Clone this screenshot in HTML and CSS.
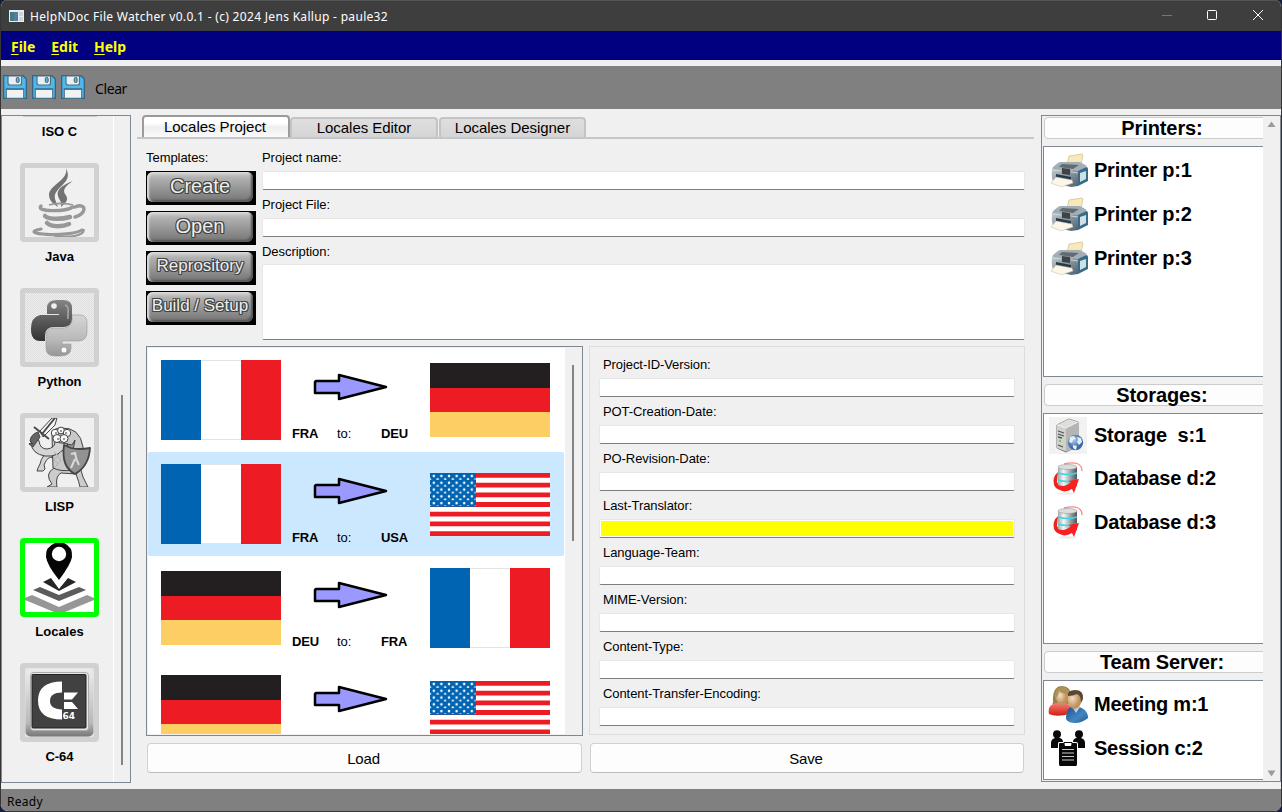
FILE: index.html
```html
<!DOCTYPE html>
<html lang="en">
<head>
<meta charset="utf-8">
<title>HelpNDoc File Watcher</title>
<link rel="stylesheet" href="styles.css">
</head>
<body>
<svg class="defs" width="0" height="0" aria-hidden="true">
  <defs>
    <linearGradient id="metal" x1="0" y1="0" x2="1" y2="1"><stop offset="0" stop-color="#c2cad0"/><stop offset=".5" stop-color="#87939b"/><stop offset="1" stop-color="#4a6071"/></linearGradient>
    <linearGradient id="disk" x1="0" y1="0" x2="1" y2="0"><stop offset="0" stop-color="#a9a9a9"/><stop offset=".3" stop-color="#f6f6f6"/><stop offset=".65" stop-color="#a0a3a5"/><stop offset="1" stop-color="#4f5357"/></linearGradient>
    <radialGradient id="globe" cx=".4" cy=".35"><stop offset="0" stop-color="#a9c8ee"/><stop offset="1" stop-color="#3b69ab"/></radialGradient>
    <radialGradient id="skin" cx=".35" cy=".4"><stop offset="0" stop-color="#f5dfc0"/><stop offset="1" stop-color="#c0925f"/></radialGradient>
    <linearGradient id="red" x1="0" y1="0" x2="0" y2="1"><stop offset="0" stop-color="#f58072"/><stop offset="1" stop-color="#d31a12"/></linearGradient>
    <linearGradient id="blue" x1="0" y1="0" x2="1" y2="1"><stop offset="0" stop-color="#1a4f8f"/><stop offset=".6" stop-color="#4487c0"/><stop offset="1" stop-color="#1d5495"/></linearGradient>
    <linearGradient id="snakeDark" x1="0" y1="0" x2="0" y2="1"><stop offset="0" stop-color="#858585"/><stop offset=".4" stop-color="#626262"/><stop offset="1" stop-color="#333"/></linearGradient>
    <linearGradient id="snakeLight" x1="0" y1="0" x2="0" y2="1"><stop offset="0" stop-color="#d6d6d6"/><stop offset=".6" stop-color="#b9b9b9"/><stop offset="1" stop-color="#969696"/></linearGradient>
    <linearGradient id="frame" x1="0" y1="0" x2="0" y2="1"><stop offset="0" stop-color="#ececec"/><stop offset=".8" stop-color="#b9b9b9"/><stop offset="1" stop-color="#777"/></linearGradient>
    <pattern id="checker" width="2" height="2" patternUnits="userSpaceOnUse"><rect width="2" height="2" fill="#efefef"/><path d="M0 0h1v1H0zM1 1h1v1H1z" fill="#dcdcdc"/></pattern>
    <pattern id="stars" width="7.6" height="6.8" patternUnits="userSpaceOnUse"><circle cx="3.8" cy="3" r="1.25" fill="#fff"/><circle cx="7.6" cy="6.3" r="1.25" fill="#fff"/><circle cx="0" cy="6.3" r="1.25" fill="#fff"/></pattern>

    <symbol id="floppy" viewBox="0 0 24 24">
      <path d="M.7.7H20l3.3 3.3v19.3H.7z" fill="#4fb9ec" stroke="#34647f" stroke-width="1.3"/>
      <path d="M5 1h13.500v7q0 2-2 2H7q-2 0-2-2z" fill="#e9eff2" stroke="#4d7082" stroke-width="1.200"/>
      <rect x="13.300" y="2.500" width="2.800" height="5" rx="1.200" fill="#63b8dd" stroke="#3c5967"/>
      <path d="M3.300 13.600h17.400v9.800H3.300z" fill="#f2f2f2" stroke="#45748d" stroke-width="1.100"/>
      <path d="M3.300 13.300h17.400v1.800H3.300z" fill="#3a7fa6"/>
    </symbol>

    <symbol id="java" viewBox="0 0 69 69">
      <path d="M41 0C44 12 24 17 24 27c0 5 4 9 9 12-3-8-5-11-1-16 5-7 15-11 9-23z" fill="#737373"/>
      <path d="M48 13c-11 4-17 9-15 15 1 4 4 5 3 11 6-5 8-8 4-13-3-5 2-9 8-13z" fill="#737373"/>
      <g fill="none" stroke="#989898" stroke-linecap="round">
        <path d="M16 38c-6 6 24 6 32 1" stroke-width="3.400"/>
        <path d="M50 39c12-5 12 7 0 10" stroke-width="3.400"/>
        <path d="M20 48c4 4 18 3 25 1M22 55c4 4 15 4 22 1" stroke-width="4.500"/>
        <path d="M16 61c-26 5 28 9 41 1" stroke-width="3.200"/>
        <path d="M30 68c14 2 28 0 29-6" stroke-width="2"/>
      </g>
      <path d="M24 37c6-2 17-2 24 0" fill="none" stroke="#999" stroke-width="1.800"/>
    </symbol>

    <symbol id="python" viewBox="0 0 69 69">
      <rect width="69" height="69" fill="url(#checker)"/>
      <path d="M47 22h8q7 0 7 8v9q0 9-9 9H37v3h9v4q0 8-11 8h-5q-9 0-9-8V43q0-8 8-8h9q9 0 9-8z" fill="url(#snakeLight)" stroke="#999" stroke-width=".6"/>
      <path d="M22 21v-6q0-8 10-8h6q9 0 9 8v10q0 9-9 9h-9q-9 0-9 9v5h-5q-9 0-9-12t9-14h19v-1z" fill="url(#snakeDark)"/>
      <path d="M40 12q4 1 3 8v6" fill="none" stroke="#aaa" stroke-width="1.500"/>
      <circle cx="29" cy="13" r="2.800" fill="#eee"/><circle cx="39" cy="57" r="3" fill="#fafafa" stroke="#888" stroke-width=".6"/>
    </symbol>

    <symbol id="lisp" viewBox="0 0 69 69">
      <g stroke="#444" stroke-width="1" stroke-linejoin="round">
        <path d="M25 34Q17 36 15 46l-2 4-1 3 6 0 2-2-1-4q4-10 9-7z" fill="#d3d3d3"/>
        <path d="M29 50q-10 6-2 16l-5 3h10q-2-11 4-14l15 1q3 8 4 13h8q-6-10-8-20z" fill="#ccc"/>
        <path d="M27 17q0-7 9-7 19-1 22 19l1 10q-1 12-11 13-12 2-20-2z" fill="#c9c9c9"/>
        <path d="M43 26Q34 40 20 38 7 36 6 25l5-7 3 5q1 8 8 8 8-1 8-7z" fill="#d5d5d5"/>
        <path d="m15 13 12-13h5l-2 7-12 12z" fill="#f5f5f5"/><path d="m9 9 15 12M30 0 17 16" fill="none" stroke-width="1.800"/>
        <path d="M13 14q-7 2-8 9l3 3q-4-2-4 0l4 3 7-10z" fill="#666"/>
        <g fill="#f9f9f9"><circle cx="30" cy="15" r="3.700"/><circle cx="36" cy="12.500" r="3.400"/><circle cx="42" cy="15" r="3.700"/><circle cx="32" cy="20.500" r="4"/><circle cx="39" cy="20.500" r="4"/></g>
        <path d="m44 31-2-5 5 1 3-5-2 10z" fill="#999"/>
        <path d="m39 27 7 3q8 2 19 0-1 18-15 26-14-7-11-29z" fill="#929292" stroke-width="1.800"/>
      </g>
      <path d="m46 36 4-1q1 7 4 12M50 41l-4 9" fill="none" stroke="#d9d9d9" stroke-width="2"/>
      <path d="m29 34 4 4-4 4 4 4-4 4M36 34l-4 4 4 4-4 5" fill="none" stroke="#b2b2b2" stroke-width="1"/>
      <g fill="#222"><circle cx="31" cy="15" r=".8"/><circle cx="36" cy="13" r=".8"/><circle cx="41" cy="15" r=".8"/><circle cx="33" cy="21" r=".8"/><circle cx="39" cy="21" r=".8"/></g>
    </symbol>

    <symbol id="locales" viewBox="0 0 69 69">
      <rect width="69" height="69" fill="#fff"/>
      <path d="m0 55 7-3 27 12 28-12 7 3v2L40 69H29L0 57z" fill="#979797"/>
      <path d="m8 47 7-3 19 8 20-8 7 3-27 11z" fill="#5c5c5c"/>
      <path d="m18 39 8-4 8 11 9-11 8 4-17 9z" fill="#262626"/>
      <path d="M30 0h9q9 4 8 14-1 7-13 23Q22 22 21 14 20 4 30 0z" fill="#050505"/>
      <circle cx="34" cy="11" r="7.200" fill="#fff"/>
    </symbol>

    <symbol id="commodore" viewBox="0 0 69 69">
      <rect width="69" height="69" fill="#e2e2e2"/>
      <rect x=".5" y=".5" width="68" height="68" rx="5" fill="url(#frame)"/>
      <rect x="5.500" y="4.500" width="58" height="58" rx="3" fill="#e8e8e8" stroke="#aaa"/>
      <rect x="7" y="6.500" width="54" height="53.500" rx="1" fill="#414141" stroke="#222"/>
      <path d="M37 13.500v11q-12 0-12 8.500 0 8 12 8.500v10q-24 0-24-19t24-19z" fill="#fff"/>
      <path d="M39 24.500h14l-6 7h-8zM39 34h8l6 7H39z" fill="#fff"/>
      <text x="37.500" y="51" class="commodore-number">64</text>
    </symbol>

    <symbol id="printer" viewBox="0 0 38 34">
      <path d="m16 11 2-8 13-2 1 1-2 10z" fill="#f8e9bb" stroke="#c3b587" stroke-width=".6"/>
      <path d="m2 14 5-4q1-1 3-1h19l7 4-9 6-26-2z" fill="#a3aeb6"/>
      <path d="m11 11 17 1-6 4-14-2z" fill="#626b70"/>
      <path d="M1 16q14 2 26 2v15l-7 1-17-4Q0 26 1 16z" fill="url(#metal)"/>
      <path d="m27 18 8-4q2 0 2 2v12l-10 5z" fill="#386b88"/><path d="m29 20 6-2v8l-6 3z" fill="#d0e1e5"/>
      <path d="m11 15 8 1v6l-8-1z" fill="#3d4448"/><path d="m5 21 15 3v4L5 24z" fill="#253b49"/>
      <path d="m5 24 16 3 1 3-12 4-10-4z" fill="#fbf6e8" stroke="#bbb8a8" stroke-width=".5"/>
      <path d="m2 17 8 1m10 1 7 1" fill="none" stroke="#dbe3e7" stroke-width=".8"/>
    </symbol>

    <symbol id="server" viewBox="0 0 38 37">
      <rect width="38" height="37" fill="#f2f2f2"/>
      <path d="m8 8 12-6 9 3v24l-12 6-9-4z" fill="#bbb" stroke="#777"/>
      <path d="m8 8 9 3v23l-9-3z" fill="#d0d0cd"/><path d="m17 11 12-6v24l-12 6z" fill="#b5b6b3"/>
      <path d="m8 8 12-6 9 3-12 6z" fill="#dededb"/><path d="m8 8 9 3 12-6" fill="none" stroke="#fff" stroke-width=".7"/>
      <path d="m9 14 6 2M9 17l6 2M9 20l4 1M9 28l5 2" stroke="#555" stroke-width="1.300"/><circle cx="11" cy="24" r="1" fill="#51d51d"/>
      <circle cx="26.500" cy="25.500" r="7.700" fill="url(#globe)"/><path d="m21 20 4-1 2 3-3 1-1 3-3-1zM28 20l4 1 1 4-3 3-2-3 1-2zM24 28l4 1-1 4-3-2z" fill="#e3edf4"/>
    </symbol>

    <symbol id="database" viewBox="0 0 32 34">
      <ellipse cx="15" cy="31.500" rx="9" ry="1.500" fill="#eee"/>
      <path d="M12 2Q30-2 30 9" fill="none" stroke="#ff8585" stroke-width="1.300"/>
      <path d="M6 10Q0 15 2 23q2 5 8 5l-5-8z" fill="#ed2522"/>
      <path d="M6 5v19q9 4 19 0V5z" fill="url(#disk)"/><ellipse cx="15.500" cy="5" rx="9.500" ry="2.500" fill="#ddd" stroke="#999" stroke-width=".6"/>
      <path d="M6 11q9 3 19 0M6 18q9 3 19 0" fill="none" stroke="#3bd7e4" stroke-width="1.500"/>
      <path d="M4 22q8 5 15-2l-3-1 11-2-5 14-2-4Q10 33 4 24z" fill="#f9201f"/>
    </symbol>

    <symbol id="meeting" viewBox="0 0 40 38">
      <path d="M5 18Q4 1 14 1q9 0 9 11v7H4z" fill="#97804e"/>
      <path d="M1 29q-2-10 8-11h9q6 2 6 10l-7 2Q7 32 1 29z" fill="url(#red)"/>
      <ellipse cx="14" cy="12" rx="6" ry="8" fill="url(#skin)"/><path d="M7 14Q6 2 14 2q7 0 8 7-8 0-11-3-1 6-4 8z" fill="#ae9259"/>
      <path d="M18 34q0-13 9-13 13 2 13 12-6 5-13 5t-9-4z" fill="url(#blue)"/>
      <path d="m21 21 4 2 3 5 4-6z" fill="#bcd2e7"/><ellipse cx="26.500" cy="15" rx="7" ry="9" fill="url(#skin)"/>
      <path d="M20 11Q19 5 27 5q9 0 8 9l-2 4q0-8-4-9-4 2-9 2z" fill="#594633"/>
    </symbol>

    <symbol id="session" viewBox="0 0 36 36">
      <g fill="#080808"><circle cx="7" cy="4.300" r="4"/><circle cx="29" cy="4.300" r="4"/>
      <path d="M1 18v-5q0-4 4-5h5q3 1 3 4H9q-1 0-1 2v4zM28 18v-4q0-2-2-2h-3q0-3 3-4h5q4 1 4 5v5z"/>
      <path d="M10 13h4l1 3h6l1-3h4q1 0 1 1v20q0 2-1 2H10q-1 0-1-2V14q0-1 1-1z"/></g>
      <path d="M14 14.500v-2h8v2" fill="none" stroke="#080808"/><path d="M12 19.500h12M12 23h12M12 26.500h12M12 30h12" stroke="#c9c9c9" stroke-width="1.100"/>
    </symbol>

    <symbol id="flag-fra" viewBox="0 0 120 80"><rect width="120" height="80" fill="#e4e4e4"/><path d="M40 1h40v78H40z" fill="#fff"/><path d="M0 0h40v80H0z" fill="#0064b3"/><path d="M80 0h40v80H80z" fill="#ed1c24"/></symbol>
    <symbol id="flag-deu" viewBox="0 0 120 74"><path d="M0 0h120v25H0z" fill="#231f20"/><path d="M0 25h120v24H0z" fill="#ed1c24"/><path d="M0 49h120v25H0z" fill="#fdce63"/></symbol>
    <symbol id="flag-usa" viewBox="0 0 120 63">
      <rect width="120" height="63" fill="#fff"/>
      <path d="M0 2.400h120M0 12.100h120M0 21.800h120M0 31.500h120M0 41.200h120M0 50.900h120M0 60.600h120" stroke="#ed1c24" stroke-width="4.800"/>
      <rect width="46" height="33.800" fill="#0064b3"/><rect width="45.600" height="33" fill="url(#stars)"/>
    </symbol>
    <symbol id="arrow" viewBox="0 0 76 28"><path d="M3 8h23V2l47 12-47 12v-6H2V9z" fill="#9999ff" stroke="#000" stroke-width="2.500" stroke-linejoin="round"/></symbol>
  </defs>
</svg>

<div class="window">
  <header class="titlebar">
    <svg class="app-icon" viewBox="0 0 15 12"><path d="M0 0h15v12H0z" fill="#e8edef"/><path d="M1 2h8v9H1z" fill="#417e80"/><path d="M5 2h4v9H5z" fill="#567ba4"/><path d="M10 2h4v4h-4zM10 7h4v4h-4z" fill="#ccd4d8"/></svg>
    <span class="title">HelpNDoc File Watcher v0.0.1 - (c) 2024 Jens Kallup - paule32</span>
    <svg class="window-controls" width="124" height="30" viewBox="0 0 124 30" fill="none"><path d="M5 14.500h10" stroke="#777"/><rect x="50.500" y="9.500" width="9" height="9" rx="1" stroke="#fff"/><path d="m96 9 10 10m0-10L96 19" stroke="#fff"/></svg>
  </header>
  <nav class="menubar"><span><u>F</u>ile</span><span><u>E</u>dit</span><span><u>H</u>elp</span></nav>
  <div class="toolbar">
    <svg><use href="#floppy"/></svg><svg><use href="#floppy"/></svg><svg><use href="#floppy"/></svg><span>Clear</span>
  </div>

  <main class="workspace">
    <aside class="languages">
      <div class="language-list">
        <div class="language-first">ISO C</div>
        <div class="language"><div class="tile"><svg><use href="#java"/></svg></div><span>Java</span></div>
        <div class="language"><div class="tile"><svg><use href="#python"/></svg></div><span>Python</span></div>
        <div class="language"><div class="tile"><svg><use href="#lisp"/></svg></div><span>LISP</span></div>
        <div class="language"><div class="tile active"><svg><use href="#locales"/></svg></div><span>Locales</span></div>
        <div class="language"><div class="tile"><svg><use href="#commodore"/></svg></div><span>C-64</span></div>
      </div>
      <div class="language-scroll"><i></i></div>
    </aside>

    <section class="editor">
      <div class="tabs"><div class="tab selected">Locales Project</div><div class="tab">Locales Editor</div><div class="tab">Locales Designer</div></div>
      <div class="page">
        <div class="project">
          <div class="templates">
            <label>Templates:</label>
            <button class="metal">Create</button><button class="metal">Open</button><button class="metal small">Reprository</button><button class="metal small">Build / Setup</button>
          </div>
          <div class="project-fields">
            <label>Project name:</label><input type="text">
            <label>Project File:</label><input type="text">
            <label>Description:</label><textarea></textarea>
          </div>
        </div>
        <div class="translation">
          <div class="pairs">
            <div class="pair-list">
              <div class="pair"><svg class="fra"><use href="#flag-fra"/></svg><div class="direction"><svg><use href="#arrow"/></svg><p><b>FRA</b><span>to:</span><b>DEU</b></p></div><svg class="deu"><use href="#flag-deu"/></svg></div>
              <div class="pair current"><svg class="fra"><use href="#flag-fra"/></svg><div class="direction"><svg><use href="#arrow"/></svg><p><b>FRA</b><span>to:</span><b>USA</b></p></div><svg class="usa"><use href="#flag-usa"/></svg></div>
              <div class="pair"><svg class="deu"><use href="#flag-deu"/></svg><div class="direction"><svg><use href="#arrow"/></svg><p><b>DEU</b><span>to:</span><b>FRA</b></p></div><svg class="fra"><use href="#flag-fra"/></svg></div>
              <div class="pair"><svg class="deu"><use href="#flag-deu"/></svg><div class="direction"><svg><use href="#arrow"/></svg></div><svg class="usa"><use href="#flag-usa"/></svg></div>
            </div>
            <div class="pair-scroll"><i></i></div>
          </div>
          <div class="metadata">
            <label>Project-ID-Version:</label><input type="text">
            <label>POT-Creation-Date:</label><input type="text">
            <label>PO-Revision-Date:</label><input type="text">
            <label>Last-Translator:</label><input type="text" class="highlight">
            <label>Language-Team:</label><input type="text">
            <label>MIME-Version:</label><input type="text">
            <label>Content-Type:</label><input type="text">
            <label>Content-Transfer-Encoding:</label><input type="text">
          </div>
        </div>
        <div class="actions"><button>Load</button><button>Save</button></div>
      </div>
    </section>

    <aside class="resources">
      <div class="resource-content">
        <h2>Printers:</h2>
        <div class="resource-list">
          <div class="resource"><svg class="printer"><use href="#printer"/></svg><span>Printer p:1</span></div>
          <div class="resource"><svg class="printer"><use href="#printer"/></svg><span>Printer p:2</span></div>
          <div class="resource"><svg class="printer"><use href="#printer"/></svg><span>Printer p:3</span></div>
        </div>
        <h2>Storages:</h2>
        <div class="resource-list storages">
          <div class="resource"><svg class="server"><use href="#server"/></svg><span>Storage&nbsp; s:1</span></div>
          <div class="resource"><svg class="database"><use href="#database"/></svg><span>Database d:2</span></div>
          <div class="resource"><svg class="database"><use href="#database"/></svg><span>Database d:3</span></div>
        </div>
        <h2>Team Server:</h2>
        <div class="resource-list team">
          <div class="resource"><svg class="meeting"><use href="#meeting"/></svg><span>Meeting m:1</span></div>
          <div class="resource"><svg class="session"><use href="#session"/></svg><span>Session c:2</span></div>
        </div>
      </div>
      <div class="resource-scroll"><svg viewBox="0 0 9 7"><path d="M4.500.5 8.500 6h-8z"/></svg><svg viewBox="0 0 9 7"><path d="M.5.5h8l-4 6z"/></svg></div>
    </aside>
  </main>
  <footer>Ready</footer>
</div>
</body>
</html>
```
FILE: styles.css
```css
* { box-sizing: border-box; }
body { margin: 0; background: #16203c; font: 13px/16px "Liberation Sans", Arial, sans-serif; color: #000; }
.defs { display: block; height: 0; }
svg { display: block; flex: none; }
.window { width: 1282px; height: 812px; overflow: hidden; display: flex; flex-direction: column; background: #f0f0f0; border: solid #353535; border-width: 0 1px 1px; border-radius: 7px 7px 8px 8px; }

.titlebar { height: 31px; flex: none; display: flex; align-items: center; background: #3e3e3e; color: #fff; border-top: 1px solid #555; }
.app-icon { width: 15px; height: 12px; margin: 0 6px 0 8px; }
.title { flex: 1; padding-top: 1px; font: 12px/18px "Noto Sans", sans-serif; letter-spacing: .31px; white-space: nowrap; }
.menubar { height: 29px; flex: none; display: flex; align-items: center; gap: 16px; padding: 2px 10px 0; background: #000080; color: #ff0; font: bold 14px/20px "Noto Sans", sans-serif; letter-spacing: -.04px; }
.menubar u { text-underline-offset: 2px; text-decoration-thickness: 1px; }
.toolbar { height: 43px; flex: none; display: flex; align-items: center; gap: 5px; margin-top: 6px; padding-left: 2px; background: #808080; }
.toolbar svg { width: 24px; height: 24px; margin-top: -1px; }
.toolbar span { margin: 3px 0 0 5px; font: 14px/18px "Noto Sans", sans-serif; letter-spacing: -.4px; }

.workspace { height: 680px; flex: none; display: flex; padding-top: 6px; }
.languages { width: 130px; height: 668px; display: flex; border: 1px solid #7f8790; overflow: hidden; }
.language-list { width: 112px; border-right: 1px solid #fff; display: flex; flex-direction: column; padding-left: 4px; align-items: center; font-weight: bold; }
.language-first { height: 47px; flex: none; width: 74px; padding-top: 7px; border-top: 1px solid #ccc; text-align: center; }
.language { height: 125px; flex: none; display: flex; flex-direction: column; align-items: center; gap: 7px; }
.tile { width: 79px; height: 79px; border: 5px solid #d1d1d1; border-radius: 4px; }
.tile.active { border-color: #0f0; }
.tile svg { width: 69px; height: 69px; }
.commodore-number { fill: #fff; font: bold 9px "DejaVu Sans", sans-serif; }
.language-scroll { width: 16px; padding: 279px 0 0 7px; }
.language-scroll i { display: block; width: 2px; height: 370px; background: #858585; }

.editor { width: 897px; margin-left: 6px; }
.tabs { height: 24px; display: flex; align-items: flex-end; gap: 1px; padding-left: 5px; border-bottom: 2px solid #c2c7cb; font-size: 15px; line-height: 18px; letter-spacing: -.04px; }
.tab { width: 147px; height: 20px; border: 2px solid #c4c4c4; border-bottom: 0; border-radius: 4px 4px 0 0; background: linear-gradient(#dedede, #d5d5d5); text-align: center; }
.tab.selected { height: 22px; width: 148px; background: linear-gradient(#fff 30%, #eee 50%, #fafafa); border-color: #9b9b9b; padding: 1px 2px 0 0; }
.tab.selected + .tab { margin-left: -1px; width: 148px; }
.page { padding: 10px 9px 0 9px; }
.project { display: flex; gap: 6px; height: 197px; }
label { display: block; height: 16px; letter-spacing: -.05px; }
.project label { padding-top: 1px; }
.templates { width: 110px; display: flex; flex-direction: column; gap: 6px; }
.metal { width: 110px; height: 34px; padding: 0 2px 4px 0; border: 0; color: #eee; font: 20px/28px "Liberation Sans", Arial, sans-serif; text-shadow: -1px -1px #444, 1px -1px #444, -1px 1px #444, 1px 1px #444, 0 1px #333, 1px 0 #333; position: relative; isolation: isolate; background: #000; }
.metal::before { content: ""; position: absolute; z-index: -1; inset: 1px 3px 3px 1px; border-radius: 6px; background: linear-gradient(#d5d5d5, #b2b2b2 18%, #969696 55%, #747474); box-shadow: inset 2px 1px 2px #ddd, inset -2px -2px 2px #555; }
.metal.small { font-size: 17px; }
.project-fields { flex: 1; }
input, textarea { appearance: none; display: block; width: 100%; margin: 0; padding: 0; border: 1px solid #e7e7e7; border-bottom-color: #7d7d7d; border-radius: 2px; background: #fff; outline: 0; resize: none; }
.project-fields input { height: 19px; margin: 6px 0; }
.project-fields textarea { height: 76px; margin-top: 5px; }

.translation { display: flex; gap: 6px; height: 390px; }
.pairs { width: 437px; padding: 1px; display: flex; border: 1px solid #7f8790; overflow: hidden; }
.pair-list { width: 417px; height: 386px; background: #fff; overflow: hidden; }
.pair { width: 416px; height: 104px; padding: 0 14px 0 13px; display: flex; align-items: center; border-radius: 2px; }
.pair.current { background: #cce8ff; }
.fra { width: 120px; height: 80px; }
.deu { width: 120px; height: 74px; }
.usa { width: 120px; height: 63px; }
.direction { width: 149px; height: 80px; padding: 13px 0 0 11px; }
.direction svg { width: 76px; height: 28px; margin-left: 21px; }
.direction p { display: flex; margin: 25px 0 0; }
.direction b { width: 45px; letter-spacing: -.2px; }
.direction span { width: 44px; }
.pair-scroll { flex: 1; padding: 17px 0 0 7px; background: #f0f0f0; }
.pair-scroll i { display: block; width: 2px; height: 176px; background: #858585; }
.metadata { width: 436px; height: 389px; padding: 10px 9px 0; border: 1px solid #dcdcdc; }
.metadata label { padding-left: 4px; letter-spacing: -.08px; }
.metadata input { width: 416px; height: 19px; margin: 5px 0 7px; }
.metadata input.highlight { background: #ff0; box-shadow: inset 0 0 0 1px #fff; }
.actions { display: flex; gap: 8px; padding: 7px 0 0 1px; }
.actions button { height: 30px; width: 435px; padding: 2px 2px 0 0; border: 1px solid #d0d0d0; border-bottom-color: #bdbdbd; border-radius: 4px; background: #fdfdfd; font: 15px/18px "Liberation Sans", Arial, sans-serif; letter-spacing: -.2px; color: #000; }
.actions button + button { width: 434px; }

.resources { width: 240px; height: 667px; margin-left: 7px; display: flex; border: 1px solid #7f8790; }
.resource-content { width: 221px; padding: 1px 0 0 1px; overflow: hidden; }
h2 { margin: 0 0 7px 1px; height: 22px; width: 236px; border: 1px solid #ccc; border-radius: 4px; background: #fdfdfd; font: bold 20px/20px "Liberation Sans", Arial, sans-serif; letter-spacing: -.1px; text-align: center; }
.resource-list { height: 231px; width: 237px; margin-bottom: 7px; padding: 1px 1px 0 0; border: 1px solid #7f8790; background: #fff; }
.resource { height: 44px; display: flex; align-items: center; font: bold 20px/24px "Liberation Sans", Arial, sans-serif; letter-spacing: -.22px; }
.resource svg { margin-left: 7px; }
.resource span { margin-left: 5px; }
.printer { width: 38px; height: 34px; }
.server { width: 38px; height: 37px; }
.database { width: 32px; height: 34px; }
.resource .database { margin: 0 5px 0 8px; }
.storages { padding-top: 0; }
.storages .resource { height: 43.5px; }
.storages .resource span { padding-bottom: 2px; }
.resource .server { margin-left: 5px; }
.resource .server + span { margin-left: 7px; }
.team { height: 100px; }
.resource .meeting { width: 40px; height: 38px; margin-left: 4px; }
.resource .meeting + span { margin-left: 6px; }
.resource .session { width: 36px; height: 36px; margin-left: 6px; }
.resource .session + span { margin-left: 8px; }
.resource-scroll { width: 17px; display: flex; flex-direction: column; justify-content: space-between; padding: 5px 0 4px 4px; }
.resource-scroll svg { width: 9px; height: 7px; fill: #9b9b9b; }
footer { height: 22px; flex: none; padding: 4px 6px 0; background: #808080; font: 12px/18px "Noto Sans", sans-serif; letter-spacing: .3px; }
```
